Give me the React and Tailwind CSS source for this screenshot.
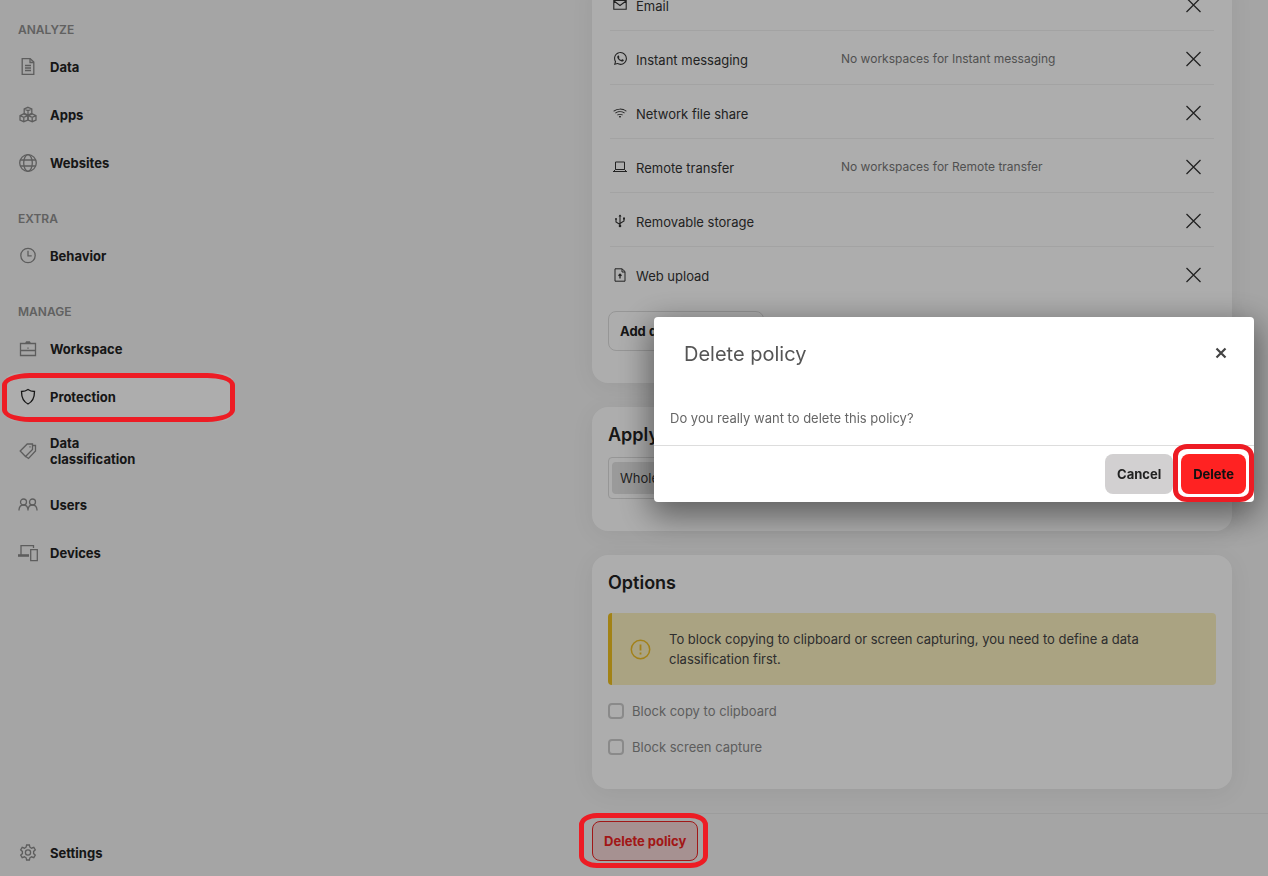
import React from 'react';
import { BsWhatsapp, BsWifi } from 'react-icons/bs';

function Icon({ children, className = 'w-5 h-5', box = '0 0 20 20' }) {
  return (
    <svg
      viewBox={box}
      fill="none"
      stroke="currentColor"
      strokeWidth="1.3"
      aria-hidden="true"
      className={`${className} flex-shrink-0`}
    >
      {children}
    </svg>
  );
}

const DataIcon = () => (
  <Icon>
    <path d="M4.200 1.700h8L15.800 5v12.300H4.200Z" />
    <path d="M12 1.700V5.500h4" />
    <path d="M7 8.500h6M7 11h6M7 13.500h6" />
  </Icon>
);

const AppsIcon = () => (
  <Icon>
    <path d="m10 2.300 3.800 1.700v4.400L10 10 6.200 8.400V4ZM6.200 4 10 5.700 13.800 4M10 5.700V10" />
    <path d="m5.800 8.800 4 1.800V15l-4 1.700L2 15v-4.400ZM2 10.600l3.800 1.700 4-1.700M5.800 12.300v4.400" />
    <path d="m14.200 8.800 3.800 1.800V15l-3.800 1.700-4-1.700v-4.400ZM10.200 10.600l4 1.700 3.800-1.700M14.200 12.300v4.400" />
  </Icon>
);

const GlobeIcon = () => (
  <Icon>
    <circle cx="10" cy="10" r="8.300" />
    <ellipse cx="10" cy="10" rx="4.300" ry="8.300" />
    <path d="M2.300 7h15.400M2.300 13h15.400" />
  </Icon>
);

const ClockIcon = () => (
  <Icon>
    <circle cx="10" cy="9.500" r="7.200" />
    <path d="M10 4.800v5h3.700" />
  </Icon>
);

const WorkspaceIcon = () => (
  <Icon>
    <path d="M2.500 4.500h15v12h-15ZM2.500 11.500h15M7.500 4.500l1-1.500h3l1 1.500M10 8.500v1.200" />
  </Icon>
);

const ShieldIcon = () => (
  <Icon>
    <path d="M10 2.500c2 1.500 4 2 6.500 2 0 6-1.500 10-6.500 12.500C5 14.500 3.500 10.500 3.500 4.500 6 4.500 8 4 10 2.500Z" />
  </Icon>
);

const TagsIcon = () => (
  <Icon>
    <path d="m2.200 10 7-7H14.500v5.500l-7 7Z" />
    <path d="M14.500 4.500h3v5.500l-7 7.500-2.700-2" />
    <path d="M12 5.300v1.200" />
  </Icon>
);

const UsersIcon = () => (
  <Icon>
    <circle cx="5.500" cy="7" r="3" />
    <circle cx="14.500" cy="7" r="3" />
    <path d="M1 15.500c0-3.500 2-5.500 4.500-5.500s4.500 2 4.500 5.500c0-3.500 2-5.500 4.500-5.500s4.500 2 4.500 5.500" />
  </Icon>
);

const DevicesIcon = () => (
  <Icon>
    <path d="M3 12V2.600h12.500V5" />
    <path d="M0 12.500h11" strokeWidth="2.600" />
    <path d="M12.700 6.600h6.600v11h-6.600Z" />
  </Icon>
);

const SettingsIcon = () => (
  <Icon>
    <circle cx="10" cy="9.500" r="2.600" />
    <path d="M8.600 2h2.800l.5 2.200 1.600 1 2.300-.8 1.500 2.500-1.700 1.500v2.200l1.700 1.500-1.500 2.500-2.300-.8-1.600 1-.5 2.200H8.600l-.5-2.200-1.600-1-2.300.8-1.500-2.500 1.700-1.500V8.400L2.700 6.900l1.500-2.500 2.300.8 1.600-1Z" />
  </Icon>
);

const MailIcon = () => (
  <Icon className="w-[14px] h-[14px]" box="0 0 14 14">
    <path d="M.8 2.500h12.400v8.800H.8ZM1 3l6 4.500L13 3" strokeWidth="1.100" />
  </Icon>
);

const LaptopIcon = () => (
  <Icon className="w-[14px] h-[14px]" box="0 0 14 14">
    <path d="M2.500 9.500V2h9v7.500M0 11.500h14M1 11l1.500-1.500h9L13 11" strokeWidth="1" />
  </Icon>
);

const UsbIcon = () => (
  <Icon className="w-[14px] h-[14px]" box="0 0 14 14">
    <path d="M7 1v11M3 5.500V8l4 2.500M11 4.500V7L7 9.500" strokeWidth="1.100" />
    <path d="M7 .5 5.500 2.500h3Z" fill="currentColor" stroke="none" />
    <circle cx="7" cy="12" r="1.300" fill="currentColor" stroke="none" />
    <circle cx="3" cy="5" r="1" fill="currentColor" stroke="none" />
    <path d="M10 3.500h2v2h-2Z" fill="currentColor" stroke="none" />
  </Icon>
);

const UploadIcon = () => (
  <Icon className="w-[14px] h-[14px]" box="0 0 14 14">
    <path d="M2 .8h7L12 3.500v9.700H2ZM9 1v3h3" strokeWidth="1" />
    <path d="M7 10.500V6.500M5.500 7.700 7 6.200l1.500 1.500" />
  </Icon>
);

const CrossIcon = () => (
  <Icon className="w-4 h-4" box="0 0 16 16">
    <path d="m.5 1 14 14M14.500 1l-14 14" />
  </Icon>
);

const menu = [
  {
    title: 'ANALYZE',
    items: [
      { name: 'Data', icon: <DataIcon /> },
      { name: 'Apps', icon: <AppsIcon /> },
      { name: 'Websites', icon: <GlobeIcon /> },
    ],
  },
  {
    title: 'EXTRA',
    items: [{ name: 'Behavior', icon: <ClockIcon /> }],
  },
  {
    title: 'MANAGE',
    items: [
      { name: 'Workspace', icon: <WorkspaceIcon /> },
      { name: 'Protection', icon: <ShieldIcon />, active: true },
      { name: 'Data classification', icon: <TagsIcon />, tall: true },
      { name: 'Users', icon: <UsersIcon /> },
      { name: 'Devices', icon: <DevicesIcon /> },
    ],
  },
];

const destinations = [
  { name: 'Email', icon: <MailIcon /> },
  {
    name: 'Instant messaging',
    icon: <BsWhatsapp className="w-[13px] h-[13px]" />,
    note: 'No workspaces for Instant messaging',
  },
  { name: 'Network file share', icon: <BsWifi className="w-[14px] h-[14px]" /> },
  { name: 'Remote transfer', icon: <LaptopIcon />, note: 'No workspaces for Remote transfer' },
  { name: 'Removable storage', icon: <UsbIcon /> },
  { name: 'Web upload', icon: <UploadIcon /> },
];

function MenuItem({ item }) {
  return (
    <a
      href="#"
      className={`relative flex items-center gap-3 pl-[18px] pr-20 text-[13px] leading-4 font-bold text-[#222222] ${
        item.tall ? 'h-[60px]' : 'h-12'
      }`}
    >
      {item.active && (
        <>
          <span className="absolute inset-y-0 left-1 right-1 rounded-xl bg-white" />
          <span className="absolute z-30 -bottom-px top-0 left-0.5 right-[3px] border-[5px] border-[#ed1c24] rounded-[28px/12px]" />
        </>
      )}
      <span className={`relative ${item.active ? 'text-[#222222]' : 'text-[#8a8a8a]'}`}>{item.icon}</span>
      <span className="relative">{item.name}</span>
    </a>
  );
}

function Sidebar() {
  return (
    <nav className="w-[238px] flex-shrink-0 flex flex-col">
      <div className="-mt-0.5">
        {menu.map((group) => (
          <div key={group.title}>
            <h3 className="h-[45px] pt-[22px] pl-[18px] text-xs leading-5 font-semibold text-[#8f8f8f]">
              {group.title}
            </h3>
            {group.items.map((item) => (
              <MenuItem key={item.name} item={item} />
            ))}
          </div>
        ))}
      </div>
      <div className="mt-auto -mb-px">
        <MenuItem item={{ name: 'Settings', icon: <SettingsIcon /> }} />
      </div>
    </nav>
  );
}

function Card({ title, children, className = '' }) {
  return (
    <section className={`bg-white rounded-2xl px-4 shadow-[0_4px_24px_rgba(0,0,0,0.06)] ${className}`}>
      {title && <h2 className="text-lg leading-6 font-semibold text-[#222222]">{title}</h2>}
      {children}
    </section>
  );
}

function Destinations() {
  return (
    <div className="px-0.5">
      <table className="w-full border-separate border-spacing-0 text-[13px] leading-5 text-[#333333]">
        <tbody>
          {destinations.map((row) => (
            <tr key={row.name} className="group">
              <td className="h-[54px] w-[231px] p-0 pt-1 border-b border-[#f0f0f0] group-last:border-0">
                <span className="flex items-center gap-[9px]">
                  <span className="w-[17px] pb-0.5 flex justify-end">{row.icon}</span>
                  {row.name}
                </span>
              </td>
              <td className="p-0 pt-0.5 border-b border-[#f0f0f0] group-last:border-0 text-xs text-[#777777]">
                {row.note}
              </td>
              <td className="w-9 p-0 pt-0.5 border-b border-[#f0f0f0] group-last:border-0">
                <button type="button" aria-label={`Remove ${row.name}`} className="block px-2">
                  <CrossIcon />
                </button>
              </td>
            </tr>
          ))}
        </tbody>
      </table>
    </div>
  );
}

function Checkbox({ label }) {
  return (
    <label className="flex items-center gap-2 h-4 text-[13px] text-[#8a8a8a]">
      <input
        type="checkbox"
        disabled
        className="appearance-none w-4 h-4 rounded border-2 border-[#cccccc]"
      />
      <span className="pt-0.5">{label}</span>
    </label>
  );
}

function DeleteDialog() {
  return (
    <div
      role="dialog"
      aria-labelledby="dialog-title"
      className="fixed z-30 top-[317px] right-[14px] w-[600px] max-w-full rounded bg-white shadow-[0_10px_32px_4px_rgba(0,0,0,0.45)]"
    >
      <div className="flex items-center justify-between h-[73px] pl-[30px] pr-[27px]">
        <h2 id="dialog-title" className="text-xl text-[#555555]">
          Delete policy
        </h2>
        <button type="button" aria-label="Close" className="pb-0.5 text-[#444444]">
          <Icon className="w-3 h-3" box="0 0 12 12">
            <path d="m1.500 1.500 9 9M10.500 1.500l-9 9" strokeWidth="2.200" />
          </Icon>
        </button>
      </div>
      <p className="px-4 pt-[18px] pb-[17px] text-[13px] leading-5 text-[#666666]">
        Do you really want to delete this policy?
      </p>
      <div className="flex justify-end gap-2 p-2 border-t border-[#dddddd] text-[13px] font-bold">
        <button type="button" className="h-10 px-3 pt-0.5 rounded-lg bg-[#d2d0d1] text-[#222222]">
          Cancel
        </button>
        <button type="button" className="relative h-10 px-3 pt-0.5 rounded-lg bg-[#ff2222] text-[#111111]">
          Delete
          <span className="absolute -inset-x-2 -top-[10px] -bottom-2 border-[5px] border-[#ed1c24] rounded-[14px/12px]" />
        </button>
      </div>
    </div>
  );
}

export default function App() {
  return (
    <div className="flex min-h-screen overflow-hidden bg-[#f3f3f3] font-['Inter','Liberation_Sans',sans-serif]">
      <Sidebar />
      <main className="flex-1 min-w-0 pl-[354px] pb-[15px]">
        <div className="-mt-[23px] pr-9 pb-6 flex flex-col gap-6">
          <Card className="pb-8">
            <Destinations />
            <button
              type="button"
              className="mt-[10px] h-10 px-[11px] pt-0.5 rounded-lg border border-[#dddddd] text-[13px] font-bold text-[#222222]"
            >
              Add destination type
            </button>
          </Card>

          <Card title="Apply to" className="pt-4 pb-8">
            <div className="mt-[10px] p-1 pl-[3px] h-[42px] rounded border border-[#dddddd]">
              <span className="inline-flex items-center h-8 px-2 pt-0.5 rounded bg-[#e3e3e3] text-[13px] text-[#333333]">
                Whole company
              </span>
            </div>
          </Card>

          <Card title="Options" className="pt-4 pb-[34px]">
            <div className="mt-[18px] flex items-center gap-[18px] h-[72px] pl-[18px] rounded border-l-4 border-[#efc020] bg-[#fbf0c0] text-[13px] leading-5 text-[#444444]">
              <span className="text-[#efbf25]">
                <Icon className="w-[21px] h-[21px]" box="0 0 21 21">
                  <circle cx="10.500" cy="10.500" r="9.200" strokeWidth="1.500" />
                  <path d="M10.500 5.500v6M10.500 13.500v2" strokeWidth="1.800" />
                </Icon>
              </span>
              <p className="max-w-[500px]">
                To block copying to clipboard or screen capturing, you need to define a data classification first.
              </p>
            </div>
            <div className="mt-[18px] flex flex-col gap-5">
              <Checkbox label="Block copy to clipboard" />
              <Checkbox label="Block screen capture" />
            </div>
          </Card>
        </div>

        <div className="pt-[7px] border-t border-[#e6e6e6]">
          <button
            type="button"
            className="relative h-10 px-[11px] pt-0.5 rounded-lg border border-[#ee2222] bg-[#f5d6d6] text-[13px] font-bold text-[#ee2222]"
          >
            Delete policy
            <span className="absolute z-30 -left-[14px] -right-[11px] -top-[9px] -bottom-2 border-[5px] border-[#ed1c24] rounded-[18px/12px]" />
          </button>
        </div>
      </main>

      <div className="fixed inset-0 z-20 bg-black/32" />
      <DeleteDialog />
    </div>
  );
}
